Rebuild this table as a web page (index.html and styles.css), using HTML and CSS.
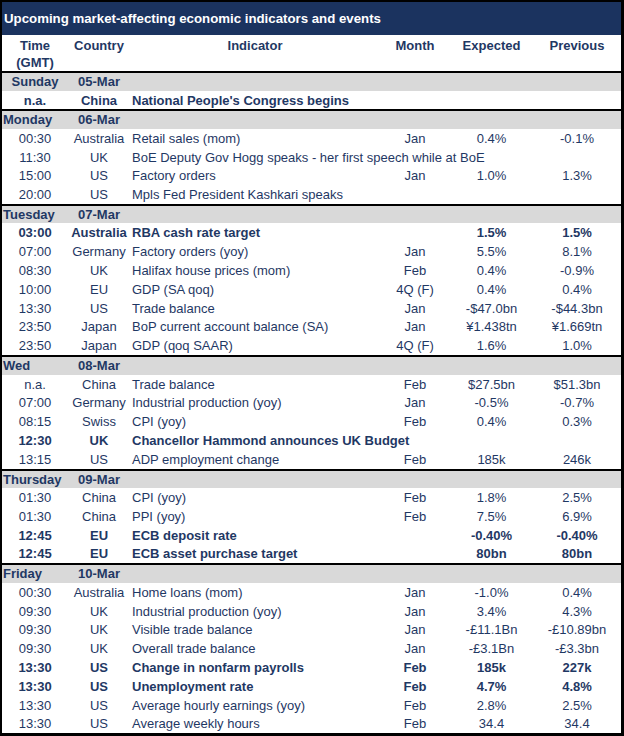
FILE: index.html
```html
<!DOCTYPE html>
<html>
<head>
<meta charset="utf-8">
<link rel="stylesheet" href="styles.css">
</head>
<body>
<div class="sheet">
  <div class="title">Upcoming market-affecting economic indicators and events</div>
  <div class="row head">
    <div class="c time">Time<br>(GMT)</div>
    <div class="c country">Country</div>
    <div class="c ind-h">Indicator</div>
    <div class="c month">Month</div>
    <div class="c exp">Expected</div>
    <div class="c prev">Previous</div>
  </div>

  <div class="row day first"><div class="c time sun">Sunday</div><div class="c country">05-Mar</div></div>
  <div class="row b"><div class="c time">n.a.</div><div class="c country">China</div><div class="c ind">National People's Congress begins</div></div>

  <div class="row day"><div class="c dayname">Monday</div><div class="c country">06-Mar</div></div>
  <div class="row"><div class="c time">00:30</div><div class="c country">Australia</div><div class="c ind">Retail sales (mom)</div><div class="c month">Jan</div><div class="c exp">0.4%</div><div class="c prev">-0.1%</div></div>
  <div class="row"><div class="c time">11:30</div><div class="c country">UK</div><div class="c ind wide">BoE Deputy Gov Hogg speaks - her first speech while at BoE</div></div>
  <div class="row"><div class="c time">15:00</div><div class="c country">US</div><div class="c ind">Factory orders</div><div class="c month">Jan</div><div class="c exp">1.0%</div><div class="c prev">1.3%</div></div>
  <div class="row"><div class="c time">20:00</div><div class="c country">US</div><div class="c ind">Mpls Fed President Kashkari speaks</div></div>

  <div class="row day"><div class="c dayname">Tuesday</div><div class="c country">07-Mar</div></div>
  <div class="row b"><div class="c time">03:00</div><div class="c country">Australia</div><div class="c ind">RBA cash rate target</div><div class="c month"></div><div class="c exp">1.5%</div><div class="c prev">1.5%</div></div>
  <div class="row"><div class="c time">07:00</div><div class="c country">Germany</div><div class="c ind">Factory orders (yoy)</div><div class="c month">Jan</div><div class="c exp">5.5%</div><div class="c prev">8.1%</div></div>
  <div class="row"><div class="c time">08:30</div><div class="c country">UK</div><div class="c ind">Halifax house prices (mom)</div><div class="c month">Feb</div><div class="c exp">0.4%</div><div class="c prev">-0.9%</div></div>
  <div class="row"><div class="c time">10:00</div><div class="c country">EU</div><div class="c ind">GDP (SA qoq)</div><div class="c month">4Q (F)</div><div class="c exp">0.4%</div><div class="c prev">0.4%</div></div>
  <div class="row"><div class="c time">13:30</div><div class="c country">US</div><div class="c ind">Trade balance</div><div class="c month">Jan</div><div class="c exp">-$47.0bn</div><div class="c prev">-$44.3bn</div></div>
  <div class="row"><div class="c time">23:50</div><div class="c country">Japan</div><div class="c ind">BoP current account balance (SA)</div><div class="c month">Jan</div><div class="c exp">¥1.438tn</div><div class="c prev">¥1.669tn</div></div>
  <div class="row"><div class="c time">23:50</div><div class="c country">Japan</div><div class="c ind">GDP (qoq SAAR)</div><div class="c month">4Q (F)</div><div class="c exp">1.6%</div><div class="c prev">1.0%</div></div>

  <div class="row day"><div class="c dayname">Wed</div><div class="c country">08-Mar</div></div>
  <div class="row"><div class="c time">n.a.</div><div class="c country">China</div><div class="c ind">Trade balance</div><div class="c month">Feb</div><div class="c exp">$27.5bn</div><div class="c prev">$51.3bn</div></div>
  <div class="row"><div class="c time">07:00</div><div class="c country">Germany</div><div class="c ind">Industrial production (yoy)</div><div class="c month">Jan</div><div class="c exp">-0.5%</div><div class="c prev">-0.7%</div></div>
  <div class="row"><div class="c time">08:15</div><div class="c country">Swiss</div><div class="c ind">CPI (yoy)</div><div class="c month">Feb</div><div class="c exp">0.4%</div><div class="c prev">0.3%</div></div>
  <div class="row b"><div class="c time">12:30</div><div class="c country">UK</div><div class="c ind wide">Chancellor Hammond announces UK Budget</div></div>
  <div class="row"><div class="c time">13:15</div><div class="c country">US</div><div class="c ind">ADP employment change</div><div class="c month">Feb</div><div class="c exp">185k</div><div class="c prev">246k</div></div>

  <div class="row day"><div class="c dayname">Thursday</div><div class="c country">09-Mar</div></div>
  <div class="row"><div class="c time">01:30</div><div class="c country">China</div><div class="c ind">CPI (yoy)</div><div class="c month">Feb</div><div class="c exp">1.8%</div><div class="c prev">2.5%</div></div>
  <div class="row"><div class="c time">01:30</div><div class="c country">China</div><div class="c ind">PPI (yoy)</div><div class="c month">Feb</div><div class="c exp">7.5%</div><div class="c prev">6.9%</div></div>
  <div class="row b"><div class="c time">12:45</div><div class="c country">EU</div><div class="c ind">ECB deposit rate</div><div class="c month"></div><div class="c exp">-0.40%</div><div class="c prev">-0.40%</div></div>
  <div class="row b"><div class="c time">12:45</div><div class="c country">EU</div><div class="c ind">ECB asset purchase target</div><div class="c month"></div><div class="c exp">80bn</div><div class="c prev">80bn</div></div>

  <div class="row day"><div class="c dayname">Friday</div><div class="c country">10-Mar</div></div>
  <div class="row"><div class="c time">00:30</div><div class="c country">Australia</div><div class="c ind">Home loans (mom)</div><div class="c month">Jan</div><div class="c exp">-1.0%</div><div class="c prev">0.4%</div></div>
  <div class="row"><div class="c time">09:30</div><div class="c country">UK</div><div class="c ind">Industrial production (yoy)</div><div class="c month">Jan</div><div class="c exp">3.4%</div><div class="c prev">4.3%</div></div>
  <div class="row"><div class="c time">09:30</div><div class="c country">UK</div><div class="c ind">Visible trade balance</div><div class="c month">Jan</div><div class="c exp">-£11.1Bn</div><div class="c prev">-£10.89bn</div></div>
  <div class="row"><div class="c time">09:30</div><div class="c country">UK</div><div class="c ind">Overall trade balance</div><div class="c month">Jan</div><div class="c exp">-£3.1Bn</div><div class="c prev">-£3.3bn</div></div>
  <div class="row b"><div class="c time">13:30</div><div class="c country">US</div><div class="c ind">Change in nonfarm payrolls</div><div class="c month">Feb</div><div class="c exp">185k</div><div class="c prev">227k</div></div>
  <div class="row b"><div class="c time">13:30</div><div class="c country">US</div><div class="c ind">Unemployment rate</div><div class="c month">Feb</div><div class="c exp">4.7%</div><div class="c prev">4.8%</div></div>
  <div class="row"><div class="c time">13:30</div><div class="c country">US</div><div class="c ind">Average hourly earnings (yoy)</div><div class="c month">Feb</div><div class="c exp">2.8%</div><div class="c prev">2.5%</div></div>
  <div class="row"><div class="c time">13:30</div><div class="c country">US</div><div class="c ind">Average weekly hours</div><div class="c month">Feb</div><div class="c exp">34.4</div><div class="c prev">34.4</div></div>
</div>
</body>
</html>
```

FILE: styles.css
```css
html, body {
  margin: 0;
  padding: 0;
  background: #000;
}
.sheet {
  box-sizing: border-box;
  width: 624px;
  height: 736px;
  border-top: 2px solid #000;
  border-left: 2px solid #000;
  border-right: 3px solid #000;
  border-bottom: 3px solid #000;
  background: #fff;
  font-family: "Liberation Sans", Arial, sans-serif;
  font-size: 13px;
  color: #1f3864;
  overflow: hidden;
}
.title {
  background: #1b335f;
  color: #fff;
  font-weight: bold;
  font-size: 13.25px;
  height: 33px;
  line-height: 33px;
  padding-left: 2px;
  white-space: nowrap;
}
.row {
  display: grid;
  grid-template-columns: 66px 62px 250px 70px 83px 1fr;
  box-sizing: border-box;
  height: 18.8px;
  padding-top: 2px;
  line-height: 16.8px;
  white-space: nowrap;
}
.c { text-align: center; }
.time { grid-column: 1; }
.country { grid-column: 2; }
.ind, .ind-h { grid-column: 3; text-align: left; padding-left: 2px; }
.ind-h { text-align: center; padding-left: 0; }
.ind.wide { grid-column: 3 / 7; }
.month { grid-column: 4; }
.exp { grid-column: 5; }
.prev { grid-column: 6; }
.head {
  height: 36px;
  line-height: 17px;
  font-weight: bold;
  padding-top: 2px;
}
.head .c { align-self: start; }
.day {
  background: #d9d9d9;
  font-weight: bold;
  border-top: 2px solid #000;
  height: 19.5px;
  padding-top: 1px;
  line-height: 16.5px;
}
.day .dayname { grid-column: 1; text-align: left; padding-left: 1px; }
.b { font-weight: bold; }
```
